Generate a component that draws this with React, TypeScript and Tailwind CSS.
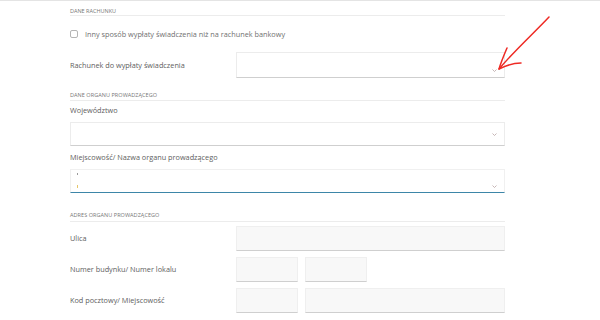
import React from "react";

const font = { fontFamily: '"Open Sans", "Noto Sans", sans-serif' };

function Chevron({ className }: { className: string }) {
  return (
    <svg className={className} width="5" height="3" viewBox="0 0 5 3">
      <path d="M0.5 0.5 L2.5 2.5 L4.5 0.5" stroke="#b9a5a5" strokeWidth="0.8" fill="none" />
    </svg>
  );
}

function SectionHeader({ text, pt, pb }: { text: string; pt: string; pb: string }) {
  return (
    <div className={`${pt} ${pb} border-b border-[#ececec]`}>
      <div className="text-[5.5px] leading-[6px] text-[#777] uppercase tracking-[0.01em]">{text}</div>
    </div>
  );
}

export default function App() {
  return (
    <div className="relative w-[600px] h-[320px] bg-white overflow-hidden" style={font}>
      <div className="border-t border-[#e4e4e4]" />
      <div className="ml-[70px] w-[435px]">
        {/* Dane rachunku */}
        <div className="pt-[7px] pb-[1px] border-b border-[#ececec]">
          <div className="text-[5.5px] leading-[6px] text-[#777] uppercase">DANE RACHUNKU</div>
        </div>
        <div className="mt-[10px] h-[16px] flex items-center">
          <div className="w-[8px] h-[8px] border border-[#b5b5b5] rounded-[2px] bg-white" />
          <span className="ml-[7px] text-[7.3px] text-[#707070]">Inny sposób wypłaty świadczenia niż na rachunek bankowy</span>
        </div>
        <div className="mt-[10px] h-[26px] flex">
          <div className="w-[166px] flex items-center text-[7.3px] text-[#606060]">Rachunek do wypłaty świadczenia</div>
          <div className="relative flex-1 bg-white border border-[#ececec] border-b-[#cfcfcf] border-b-[1.5px]">
            <Chevron className="absolute right-[7px] bottom-[5px]" />
          </div>
        </div>

        {/* Dane organu */}
        <SectionHeader text="DANE ORGANU PROWADZĄCEGO" pt="pt-[14px]" pb="pb-[2px]" />
        <div className="mt-[4px] h-[10px] flex items-center text-[7.3px] text-[#606060]">Województwo</div>
        <div className="relative mt-[7px] h-[24px] bg-white border border-[#ececec] border-b-[#cfcfcf] border-b-[1.5px]">
          <Chevron className="absolute right-[7px] top-[10px]" />
        </div>
        <div className="mt-[6px] h-[10px] flex items-center text-[7.3px] text-[#606060]">Miejscowość/ Nazwa organu prowadzącego</div>
        <div className="relative mt-[7px] h-[24px] bg-white border border-[#f0f0f0] border-b-[#3d86a8] border-b-[1.5px]">
          <span className="absolute left-[6px] top-[3px] w-[1px] h-[2px] bg-[#9a9a9a]" />
          <span className="absolute left-[6px] top-[15px] w-[1px] h-[3px] bg-[#e6c66a]" />
          <Chevron className="absolute right-[7px] top-[15px]" />
        </div>

        {/* Adres */}
        <SectionHeader text="ADRES ORGANU PROWADZĄCEGO" pt="pt-[19px]" pb="pb-[3px]" />
        <div className="mt-[4px] h-[25px] flex">
          <div className="w-[166px] flex items-center text-[7.3px] text-[#606060]">Ulica</div>
          <div className="flex-1 bg-[#f8f8f8] border border-[#efefef] border-b-[#cfcfcf]" />
        </div>
        <div className="mt-[6px] h-[25px] flex">
          <div className="w-[166px] flex items-center text-[7.3px] text-[#606060]">Numer budynku/ Numer lokalu</div>
          <div className="w-[62px] bg-[#f8f8f8] border border-[#efefef] border-b-[#cfcfcf]" />
          <div className="ml-[7px] w-[62px] bg-[#f8f8f8] border border-[#efefef] border-b-[#cfcfcf]" />
        </div>
        <div className="mt-[6px] h-[25px] flex">
          <div className="w-[166px] flex items-center text-[7.3px] text-[#606060]">Kod pocztowy/ Miejscowość</div>
          <div className="w-[62px] bg-[#f8f8f8] border border-[#efefef] border-b-[#cfcfcf]" />
          <div className="ml-[7px] flex-1 bg-[#f8f8f8] border border-[#efefef] border-b-[#cfcfcf]" />
        </div>
      </div>

      {/* red annotation arrow */}
      <svg className="absolute left-0 top-0" width="600" height="320" viewBox="0 0 600 320">
        <path d="M549 17 C535 32 515 50 499 69" stroke="#ee2a24" strokeWidth="1.5" fill="none" strokeLinecap="round" />
        <path d="M507 48 C504 55 501 62 499 69 C505 66 513 63 521 63" stroke="#ee2a24" strokeWidth="1.5" fill="none" strokeLinecap="round" strokeLinejoin="round" />
      </svg>
    </div>
  );
}
